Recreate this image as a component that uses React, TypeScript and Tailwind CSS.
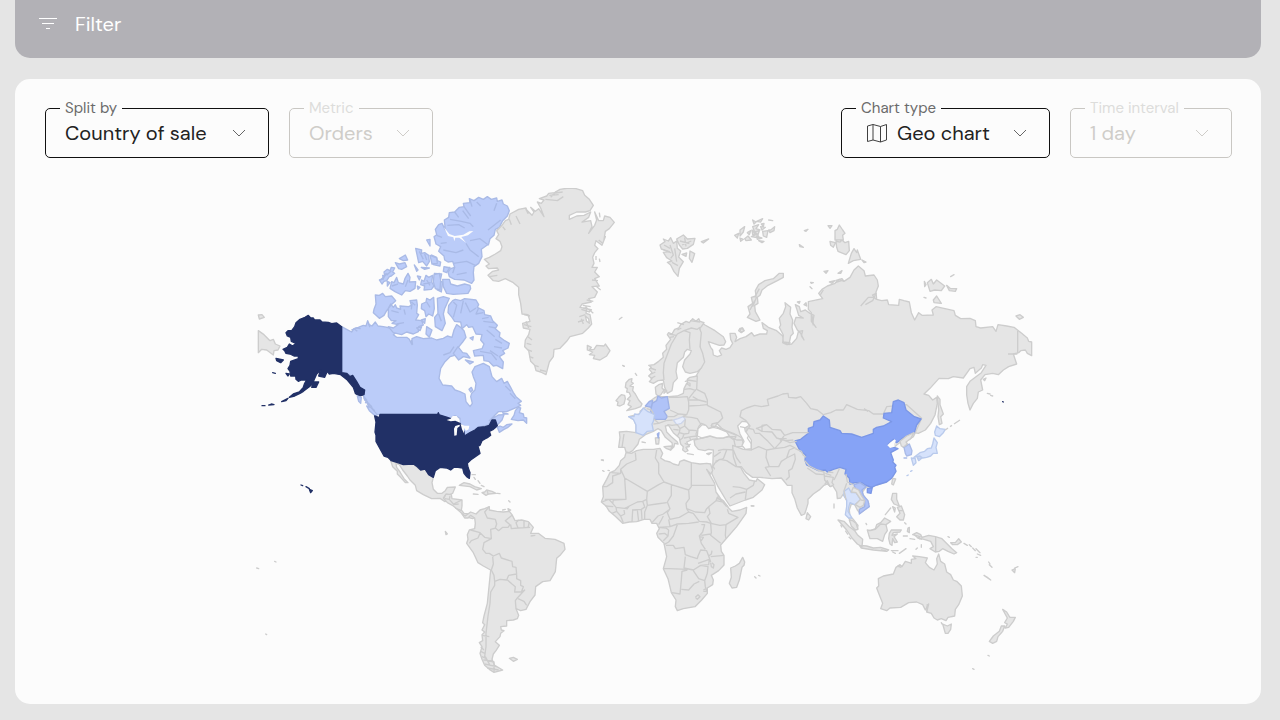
import React from 'react';

type Tone = 'none' | 'us' | 'china' | 'germany' | 'canada' | 'france' | 'hungary' | 'sea' | 'lake';

interface Shape {
  tone: Tone;
  d: string;
}

interface MapSheet {
  name: string;
  x: number;
  y: number;
  shapes: Shape[];
  // borders and fjords, drawn as lines only
  lines?: string;
  blueLines?: string;
}

const toneClass: Record<Tone, string> = {
  none: 'fill-[#e5e5e5] stroke-[#cdcdcd]',
  us: 'fill-[#213066] stroke-[#213066]',
  china: 'fill-[#86a3f6] stroke-[#7b97e6]',
  germany: 'fill-[#b0c3f8] stroke-[#9fb2e6]',
  canada: 'fill-[#bbccf9] stroke-[#a9bae6]',
  france: 'fill-[#d6e2fb] stroke-[#b9caec]',
  hungary: 'fill-[#e8eefc] stroke-[#cdd5ea]',
  sea: 'fill-[#fcfcfc] stroke-[#cdcdcd]',
  lake: 'fill-[#fcfcfc] stroke-none',
};

// Every sheet is drawn at three units per map unit, from its own corner.
const sheets: MapSheet[] = [
  {
    name: 'russia',
    x: 740,
    y: 210,
    shapes: [
      { tone: 'none', d: 'M-120,335 -105,345 -75,362 -50,380 -43,395 -48,405 -62,406 -95,395 -88,412 -82,420 -80,435 -68,440 -55,435 -62,422 -55,414 -42,418 -30,413 -22,400 -28,388 -30,370 -15,370 -10,382 -15,395 0,386 18,380 35,368 42,378 60,372 80,372 82,362 70,355 66,338 76,345 85,352 110,362 128,378 130,396 148,398 152,378 160,370 156,352 158,330 150,312 152,292 135,278 137,290 130,310 118,325 122,345 118,352 130,375 128,398 140,404 155,402 170,385 175,365 188,362 184,378 192,390 182,370 172,360 162,340 168,322 190,324 176,316 170,296 166,284 178,290 182,305 196,300 210,310 222,316 218,338 228,352 214,334 214,308 205,298 205,275 248,266 236,250 246,238 262,228 285,220 298,208 312,214 330,202 342,180 355,168 372,182 376,198 402,195 412,210 415,228 408,246 410,268 425,272 442,270 446,284 476,286 478,268 492,272 508,276 514,308 524,330 536,308 546,316 580,315 576,300 588,290 615,296 642,302 646,316 662,326 690,325 706,332 708,350 722,354 758,350 768,364 774,344 800,348 822,352 845,370 862,384 866,394 875,396 875,437 862,430 856,420 842,422 836,428 820,432 830,462 806,470 790,480 775,494 758,490 735,494 722,510 728,540 715,546 712,565 700,580 690,600 684,580 680,555 680,530 690,514 708,500 724,488 738,466 728,464 724,474 706,490 702,472 690,476 670,504 640,500 625,506 597,505 570,535 552,552 566,556 578,570 590,562 592,580 585,615 572,640 556,660 535,670 522,668 400,660 250,640 120,640 20,660 20,690 -15,680 -55,655 -70,640 -130,600 -150,540 -130,495 -115,470 -120,420z' },
      { tone: 'none', d: 'M22,322 30,312 24,290 38,280 34,262 48,258 46,242 56,224 75,212 100,206 118,190 130,190 130,202 112,212 84,226 66,240 60,256 52,262 54,280 44,286 46,305 60,330 48,334 35,328z' },
      { tone: 'none', d: 'M285,62 292,58 298,45 308,60 315,70 308,76 310,90 285,90zM288,94 300,96 306,90 315,98 326,94 328,122 318,134 294,124 290,112zM270,94 286,98 280,112 272,106zM325,160 334,130 342,116 350,128 352,120 362,148 340,152zM366,150 378,156 372,158zM264,47 276,47 270,55zM193,62 204,58 198,64zM178,104 190,112 180,110zM252,184 264,182 258,190zM294,190 306,182 302,190zM212,217 220,218 214,220zM210,230 216,236zM268,216 284,212 276,220z' },
      { tone: 'none', d: 'M562,218 574,208 580,222 590,210 614,228 604,242 584,240 570,244zM620,226 632,236 650,236 646,244 628,242zM590,258 604,280 582,278 580,270zM553,214 558,224 554,230zM632,200 642,194zM552,262 558,264zM828,318 840,314 850,322 838,328z' },
      { tone: 'none', d: 'M38,30 48,36 42,42zM50,34 68,26 62,36zM64,42 72,40 70,50zM86,30 98,32zM38,50 56,44 48,56 60,60 44,66zM62,50 76,52 66,60zM92,60 104,50 102,62 90,68 86,60zM68,64 84,62 80,82 70,78zM34,80 52,72 58,84zM0,60 14,50 10,66 0,78zM22,68 32,62 28,74zM14,86 24,78 34,90 18,92zM56,92 72,94 66,98zM0,84 10,88 2,94zM-16,76 -4,70 -8,84zM44,66 58,62 54,74zM50,78 66,84 52,88zM36,60 46,72 38,74z' },
      { tone: 'none', d: 'M0,355 8,354 12,362 4,368 -4,362zM172,276 180,274 178,280zM192,284 198,278 200,288zM730,508 738,504 734,512zM742,550 750,552zM752,556 758,558z' },
    ],
    lines: 'M833,363 833,430M804,432 832,432M362,288 385,262 402,262M285,218 310,210M130,398 150,404M140,404 152,398M376,284 398,272 408,250 396,256M286,212 306,206 312,214M240,256 250,240M30,300 44,272M38,290 50,260M44,262 58,236M216,316 220,346M398,256 408,268',
  },
  {
    name: 'svalbard',
    x: 650,
    y: 225,
    shapes: [
      { tone: 'none', d: 'M30,60 45,50 40,42 55,48 62,38 70,55 80,48 82,70 92,78 86,96 100,110 88,130 84,154 72,140 62,120 52,112 66,108 50,98 40,82 58,80 34,72zM80,42 100,30 112,42 135,40 130,58 112,70 98,72 88,60zM96,88 110,84 108,94zM120,78 134,86 126,112 118,100zM154,50 176,42 160,54z' },
    ],
    lines: 'M60,60 70,90 62,100M74,70 80,110M90,48 118,56M96,60 124,48M42,60 60,70M40,74 64,84M66,112 84,122M104,38 108,64',
  },
  {
    name: 'canada mainland and alaska',
    x: 250,
    y: 300,
    shapes: [
      { tone: 'none', d: 'M25,92 42,104 60,122 70,118 76,132 90,138 84,150 72,152 70,165 50,150 35,148 25,158zM25,45 36,44 43,52 28,57z' },
      { tone: 'canada', d: 'M275,80 290,88 305,96 312,86 325,82 340,76 348,78 353,62 358,74 366,78 376,66 384,78 400,80 420,84 440,96 430,104 440,112 470,112 478,118 486,134 486,116 500,110 520,116 545,114 560,120 580,115 592,108 606,112 612,90 620,74 632,82 642,92 648,112 638,126 620,148 614,166 600,170 585,185 572,205 567,235 578,255 605,258 615,270 630,275 645,282 648,305 660,320 667,310 662,290 665,280 675,270 678,250 670,230 666,216 675,200 700,190 718,200 726,230 740,245 755,235 762,250 772,244 782,262 790,278 798,290 814,304 804,310 812,316 800,322 770,335 745,335 730,350 718,362 745,345 762,344 756,360 742,375 725,360 715,375 685,382 660,398 643,410 640,395 642,380 630,370 630,355 615,347 600,355 565,345 390,343 376,344 372,330 360,325 352,305 344,300 340,286 330,278 300,225 275,218z' },
      { tone: 'us', d: 'M108,98 114,92 125,92 134,80 138,68 150,58 165,52 175,46 182,54 190,54 194,60 210,60 216,66 235,67 245,71 260,69 275,80 275,218 290,220 300,230 308,226 320,245 330,262 344,270 342,284 328,288 316,280 310,262 292,240 272,224 250,220 238,222 232,214 224,232 206,228 212,210 200,222 192,240 188,252 176,262 160,274 150,280 134,288 118,292 130,282 148,276 160,262 164,250 170,240 154,240 145,244 138,238 137,228 122,228 120,214 114,206 120,196 122,184 145,176 145,168 132,168 120,162 108,160 104,152 99,148 112,142 118,132 128,138 138,130 124,124 122,112 112,108z' },
      { tone: 'us', d: 'M78,175 100,180 92,188 80,182zM108,220 118,222 114,228zM95,305 114,295 108,302zM56,315 64,312 72,314zM36,317 45,317zM68,218 76,220zM185,262 192,246 206,246 198,262zM153,555 158,557zM168,560 178,566zM178,568 187,572 182,578z' },
      { tone: 'canada', d: 'M322,288 334,292 332,310 326,304zM350,318 362,322 382,344 376,348 358,332z' },
      { tone: 'none', d: 'M20,804 26,806zM74,784 78,786zM47,1002 50,1004z' },
      { tone: 'us', d: 'M2258,305 2260,306z' },
    ],
    blueLines: 'M312,86 322,94M353,66 360,82M484,120 488,134M340,288 350,300 346,310M350,306 366,320M580,165 600,158 612,140M342,294 356,318M356,310 374,334M304,90 318,84 332,86M766,258 782,274M780,280 796,296',
  },
  {
    name: 'western arctic islands',
    x: 250,
    y: 180,
    shapes: [
      { tone: 'canada', d: 'M376,345 388,346 398,340 406,350 425,348 437,362 424,374 410,392 402,406 388,415 370,398 372,388 378,372zM415,385 422,372 430,382 436,374 440,384 452,388 450,378 476,380 484,376 480,362 500,360 502,375 500,400 506,404 497,420 515,422 520,435 506,440 505,455 490,462 470,456 455,464 430,458 415,440 430,444 444,434 426,430 438,422 424,422 415,410z' },
      { tone: 'canada', d: 'M388,300 400,296 398,286 404,288 402,276 412,268 420,272 424,262 434,264 428,276 434,280 424,288 418,290 410,302 402,304 396,312zM412,304 420,308 412,318zM448,236 466,225 473,240 460,242zM436,248 448,252 465,248 470,260 455,268 446,266z' },
      { tone: 'canada', d: 'M425,305 432,308 440,292 445,308 460,312 465,295 474,280 480,292 478,306 497,305 495,325 480,334 466,332 455,345 435,335 420,325zM497,205 515,210 514,220 524,218 536,226 538,245 530,258 518,244 506,248zM545,225 560,232 562,242 572,246 570,258 550,254zM493,255 504,270 500,274zM530,180 540,178 540,198zM502,288 512,290 508,300zM502,318 510,322 504,328zM514,262 538,264 524,268z' },
      { tone: 'canada', d: 'M515,300 522,304 528,286 536,292 548,286 545,306 552,318 544,328 522,330 524,318 512,314zM553,280 575,282 572,296 558,298zM556,302 578,306 574,336 562,330zM585,262 600,262 592,274z' },
      { tone: 'canada', d: 'M515,372 528,366 530,355 540,360 551,352 553,386 548,408 536,402 528,410 524,392 514,386zM562,355 580,350 598,355 584,386 580,402 586,430 576,452 556,440 554,412 564,400zM500,444 515,440 510,452zM514,420 526,416 524,430zM530,440 546,450 538,472 528,462z' },
    ],
    blueLines: 'M424,392 446,398M462,388 466,404M486,372 484,388M440,432 462,428M524,222 530,240M408,280 398,300M474,300 466,320M530,300 540,316M566,402 574,424M392,300 412,280M410,286 424,272M426,318 444,312M508,214 520,238M520,312 542,308M530,366 540,382M484,366 496,376',
  },
  {
    name: 'ellesmere, baffin, greenland',
    x: 420,
    y: 180,
    shapes: [
      { tone: 'canada', d: 'M73,120 86,112 88,98 104,96 118,82 132,80 130,70 150,68 148,56 162,62 176,52 190,58 202,50 214,58 230,54 232,64 246,60 250,72 262,78 268,92 262,108 248,122 238,142 226,148 222,166 210,176 206,192 184,208 186,230 176,250 162,260 160,278 162,300 155,310 132,300 104,298 88,290 84,276 92,266 104,262 98,244 84,246 74,240 72,228 56,214 62,200 48,192 42,170 50,164 46,148 56,134 66,130 76,150z' },
      { tone: 'canada', d: 'M68,298 88,298 92,312 112,318 134,312 150,316 152,326 144,340 100,343 80,340 70,320zM42,284 58,280 62,300 60,330 46,326 40,306zM30,226 50,234 52,250 36,252zM72,260 88,264 80,278 70,274z' },
      { tone: 'canada', d: 'M84,398 86,376 98,362 106,358 122,362 134,356 168,360 176,374 172,382 192,392 194,404 212,408 218,422 232,436 226,446 240,458 238,470 254,482 268,490 264,504 248,512 254,520 238,530 250,546 248,566 230,556 220,558 206,544 192,542 190,526 164,528 160,512 186,506 192,492 182,480 186,464 168,462 158,440 146,442 140,434 126,446 122,426 104,424 96,412z' },
      { tone: 'canada', d: 'M100,520 114,500 128,518 140,520 150,534 130,530 116,540zM136,540 160,546 150,552zM150,474 160,470 158,480z' },
      { tone: 'none', d: 'M193,238 208,232 226,222 242,212 246,200 240,184 228,176 236,164 230,152 246,136 256,122 266,118 270,102 296,88 318,84 324,100 318,88 336,106 342,96 332,82 346,94 356,86 372,110 362,84 352,66 364,70 372,60 358,56 380,48 386,40 404,38 420,28 446,24 468,26 488,32 494,46 508,58 520,76 510,92 496,96 470,96 448,106 448,118 470,108 492,106 512,96 506,112 486,126 512,122 516,140 506,160 524,136 530,120 524,96 536,122 550,122 554,108 570,112 583,127 568,146 556,154 552,178 556,170 546,196 528,182 524,196 534,206 524,218 518,232 522,250 516,262 532,262 524,276 538,290 524,296 538,318 516,320 532,336 524,352 506,356 514,366 486,372 480,382 500,386 498,400 510,404 515,432 505,444 488,460 450,470 440,484 420,505 402,508 400,530 388,546 378,584 362,576 348,572 344,556 332,544 326,512 314,500 316,480 326,464 330,448 310,444 308,430 330,424 324,404 306,402 302,370 296,344 296,322 280,308 256,296 236,304 220,302 204,286 218,274 236,270 232,264 206,266 198,258 208,252z' },
      { tone: 'none', d: 'M502,496 514,502 508,510 522,508 530,496 552,498 556,492 570,512 560,528 540,540 520,536 524,526 508,524 518,516 502,510zM598,418 606,412zM609,557 613,559z' },
      { tone: 'sea', d: 'M496,408 506,416 508,430 500,424z' },
    ],
    lines: 'M288,108 300,132M268,118 274,134M388,46 416,44M376,58 414,62M392,52 410,34M400,40 428,36M412,62 430,50M536,180 548,190M530,320 542,330M488,376 512,380M478,410 496,404M474,426 492,420M500,360 520,364M484,388 510,396M312,404 330,408M312,434 334,440M324,470 336,480M320,490 334,494M324,510 336,514M328,530 340,534M342,556 356,560M360,570 378,574M516,300 534,302M318,424 326,444M490,384 516,390M538,98 540,112M528,228 528,240M538,236 540,246M248,140 256,150M208,290 232,286M496,380 520,400M484,416 490,432',
    blueLines: 'M132,80 152,108M150,60 156,80M128,92 146,116M104,96 116,112M170,66 182,78M90,118 124,124 150,130 160,140M82,136 116,134 134,144M230,70 222,92M206,196 180,176 150,182M176,230 150,210 138,190M100,250 140,244 166,256M70,210 108,218 130,210M62,190 80,188M50,166 66,172M104,262 98,280M110,284 140,278M100,366 110,376 100,412M130,362 122,400M136,368 150,396 168,384M176,384 168,402 190,398M186,416 206,412M190,424 222,428M206,440 228,444M200,450 224,470M226,478 246,490M222,500 246,504M210,512 234,528M180,514 214,520 230,540M242,120 204,150',
  },
  {
    name: 'axel heiberg channel',
    x: 420,
    y: 180,
    shapes: [{ tone: 'lake', d: 'M72,142 88,162 104,168 130,164 148,154 160,153 144,166 124,171 138,188 118,173 106,173 103,184 100,172 84,168z' }],
  },
  {
    name: 'usa and central america',
    x: 360,
    y: 370,
    shapes: [
      { tone: 'none', d: 'M92,272 120,282 160,282 178,298 195,297 205,312 220,322 216,338 220,358 232,370 246,370 256,362 262,352 286,351 278,370 265,375 268,388 255,395 240,385 215,386 190,374 170,362 166,346 150,330 142,318 128,300 118,284 108,280 110,292 120,306 132,326 144,338 136,338 122,322 112,312 112,304 98,290z' },
      { tone: 'none', d: 'M250,384 258,372 274,374 276,386 306,390 306,408 304,420 312,430 326,432 340,430 346,440 338,446 316,440 300,425 280,408 262,398z' },
      { tone: 'none', d: 'M298,346 312,338 330,342 344,350 364,356 350,360 330,350zM366,368 374,366 380,360 396,364 408,370 386,372 378,376zM412,370 420,371zM340,372 354,373zM336,314 346,314zM342,322 346,328zM354,332 360,340zM364,346 372,350zM446,392 450,396zM428,420 436,418zM444,416 452,420 446,424zM256,484 262,492 258,494z' },
      { tone: 'us', d: 'M60,133 233,133 235,128 238,135 262,142 272,146 286,152 298,158 303,165 312,185 313,198 330,188 345,180 355,172 376,170 388,166 396,150 406,150 412,168 400,178 388,184 392,196 384,202 376,206 366,212 360,226 354,228 360,250 346,260 332,270 322,280 324,292 330,308 328,325 320,320 312,310 308,294 294,292 282,292 272,300 260,294 240,292 226,302 220,322 206,314 195,297 182,300 172,290 160,282 130,284 120,280 94,272 84,262 72,258 60,236 48,214 48,196 45,186 48,156 44,138 56,142 56,150z' },
      { tone: 'canada', d: 'M454,148 462,136 466,122 474,112 482,114 478,128 490,132 492,142 500,144 500,160 490,150 474,152zM412,172 420,168 430,172 440,164 456,162 444,172 432,178 418,187zM428,128 444,132 432,132z' },
      { tone: 'lake', d: 'M260,150 272,146 278,138 290,138 298,150 300,158 286,152 272,154zM283,197 282,176 286,168 298,164 300,168 292,174 290,196zM302,162 314,167 328,167 326,178 318,182 312,174 312,190 306,178z' },
      { tone: 'canada', d: 'M327,58 334,52 338,60 332,66z' },
    ],
    lines: 'M255,386 268,388 270,378M268,388 280,402 306,390M280,404 296,402M286,414 304,422M258,372 252,384M382,362 384,374',
  },
  {
    name: 'south america',
    x: 450,
    y: 490,
    shapes: [
      { tone: 'none', d: 'M36,72 46,78 62,66 78,72 90,60 104,56 118,50 118,60 140,64 160,66 178,64 186,74 195,92 215,90 235,95 250,112 242,130 265,130 285,145 315,148 342,160 345,178 332,194 320,205 316,245 300,272 278,275 257,290 255,315 240,335 228,358 212,362 198,356 206,376 202,386 190,390 170,392 170,408 152,410 154,420 162,422 152,430 150,440 136,455 148,466 138,482 130,492 126,508 134,526 158,540 132,547 118,538 104,526 96,508 90,490 96,470 88,458 98,452 96,434 104,426 96,420 104,404 98,398 102,378 112,340 122,240 100,228 84,218 70,188 50,160 54,148 52,134 58,120 74,116 76,100 74,84 62,76 54,84 44,84z' },
      { tone: 'none', d: 'M178,505 190,502 202,508 190,514z' },
    ],
    lines: 'M118,50 104,66 112,84 136,88 140,102 136,114 146,122 158,112 174,112 180,104 166,92 186,76M62,120 90,128 104,142 124,146 122,118 138,114M90,130 84,144 64,152 58,160M124,146 102,158 98,178 108,190 118,190 130,198 148,190 154,204 186,214 188,230 198,232 200,252 176,256 170,270 150,268 134,274 132,256 124,240 130,222 128,200M182,104 184,116 204,114 198,98 206,90M204,114 240,112M222,92 222,112M238,96 234,114M170,268 186,282 196,290 194,306 214,306 220,290 212,286 212,272 200,266 200,254M214,306 224,300 202,324 196,332 198,356M204,326 222,334 230,346M242,138 256,136M134,274 134,286 122,306 120,340 114,378 108,430 108,470 104,500 112,512 132,516 132,546M100,510 128,512M104,522 140,530M96,500 110,506M92,470 102,480M92,484 104,490M96,436 118,440M106,500 120,526M112,534 146,540',
  },
  {
    name: 'europe',
    x: 590,
    y: 300,
    shapes: [
      { tone: 'none', d: 'M178,245 186,236 176,228 186,218 178,208 184,202 176,196 192,194 206,184 220,172 218,160 230,148 228,136 242,118 232,104 236,98 246,102 254,88 266,84 272,74 288,64 298,68 308,56 318,64 326,56 330,64 342,68 334,80 328,85 334,98 330,140 338,160 344,186 334,204 322,215 300,220 286,216 278,200 284,180 300,162 304,152 292,148 284,156 280,172 262,188 258,215 262,235 250,248 246,272 232,280 224,262 220,240 204,242 190,250z' },
      { tone: 'none', d: 'M322,228 300,232 292,238 292,248 300,250 300,258 290,250 282,266 280,280 262,288 235,290 206,290 198,282 196,262 206,254 218,250 216,264 222,270 212,285 196,292 180,304 168,320 160,326 150,334 156,340 140,344 116,350 132,360 138,375 138,398 110,394 88,396 90,412 86,442 104,442 108,456 118,458 128,452 144,432 148,418 166,404 190,394 204,386 214,392 226,412 246,428 248,442 242,450 252,440 254,430 264,432 262,426 244,410 230,396 226,378 236,376 250,398 268,414 272,432 280,440 278,450 286,456 294,452 288,442 298,440 290,426 308,418 322,416 318,402 326,380 334,370 344,374 352,388 366,382 364,376 384,368 398,354 392,336 352,316 352,300 344,280 320,268z' },
      { tone: 'none', d: 'M312,420 330,416 360,408 392,414 420,410 438,410 432,420 436,440 440,470 450,510 368,510 370,450 355,448 345,452 325,448 315,436zM380,380 402,390 430,400 446,408 456,414 462,440 436,440 432,420 418,410 400,400z' },
      { tone: 'none', d: 'M118,238 126,236 124,246 130,250 120,258 130,260 128,272 136,282 146,300 156,312 152,320 136,326 110,332 124,320 114,314 120,302 112,298 122,288 118,278 110,276 112,266 106,262 108,248zM82,316 84,306 78,302 86,292 94,284 104,286 106,296 102,312 90,318zM98,196 102,198zM136,220 140,226zM222,440 246,438 242,450 230,446zM196,414 208,412 206,432 198,432zM292,461 310,464zM350,461 364,458 356,464zM222,268 230,272 222,280zM156,426 166,428zM34,480 40,480zM286,244 294,242zM450,90 456,84 462,92 454,96z' },
      { tone: 'germany', d: 'M204,288 214,294 232,290 238,325 222,334 232,350 226,358 192,358 190,342 182,334 186,310 200,302z' },
      { tone: 'germany', d: 'M166,318 178,304 188,302 184,322 174,320zM202,402 207,398 205,414z' },
      { tone: 'france', d: 'M116,350 132,350 134,342 146,344 160,324 172,334 194,344 190,364 186,372 190,392 172,394 160,406 138,398 138,375 130,358z' },
      { tone: 'hungary', d: 'M250,360 264,356 280,350 286,358 274,370 260,374z' },
      { tone: 'sea', d: 'M443,378 456,364 476,366 478,376 464,384 466,394 478,404 472,414 484,432 484,446 466,448 456,436 462,424 450,402z' },
      { tone: 'sea', d: 'M322,408 324,386 336,374 348,376 356,386 370,382 386,386 410,396 418,408 400,414 380,414 360,408 336,414z' },
      { tone: 'none', d: 'M366,372 382,368 376,380 364,378z' },
    ],
    lines: 'M222,240 220,218 222,190 244,132 262,102 282,92 300,98 298,120 300,148M282,92 304,84 322,88 330,82M262,90 274,84M240,112 252,110M184,222 196,216M180,204 198,210M182,236 196,228M236,292 262,292 292,290 296,306 296,330 290,344 266,342 240,330M296,300 326,300 350,306M296,330 296,318 330,316 352,314M290,344 278,350M282,268 300,266 318,272M292,240 320,244M296,296 310,278 318,268M308,290 326,300M280,350 304,352 322,356 332,372M286,358 284,378 296,390 320,392M266,342 252,350 232,350M192,358 206,370 228,362 248,360M206,370 190,372M246,376 262,374 270,386 284,378M232,374 248,376M270,386 268,398 262,408M250,388 266,390M268,398 282,402 278,414 270,420M282,402 296,400 298,390M282,414 304,410 322,408M102,402 96,442M298,410 302,420M284,430 300,436M170,326 184,330 190,340M384,452 400,448 436,450M372,470 392,456M410,450 400,476 376,484M400,390 440,406M420,410 440,420 460,420M480,364 500,364 520,370M290,440 302,432M262,68 282,74M300,62 330,66M238,102 258,106',
  },
  {
    name: 'asia',
    x: 740,
    y: 370,
    shapes: [
      { tone: 'none', d: 'M-22,226 -20,260 -10,290 4,290 18,308 38,322 60,322 96,326 124,324 134,336 142,346 156,346 156,368 164,386 172,414 184,436 194,432 198,420 204,400 204,388 220,372 240,358 252,346 262,342 272,350 278,346 290,366 292,386 302,384 310,372 320,392 322,420 318,432 330,450 336,470 352,478 354,466 340,448 330,440 328,420 334,402 344,404 352,420 360,430 378,416 386,400 376,384 366,368 378,352 410,345 440,335 465,300 450,245 470,225 482,216 490,232 500,230 496,216 520,200 525,190 545,145 500,104 440,110 430,132 400,132 386,122 352,118 320,104 310,120 288,120 272,128 250,134 232,120 212,116 200,100 182,80 168,84 146,82 144,70 128,72 114,78 82,88 86,106 64,110 44,106 20,114 4,122 0,140 18,152 30,168 18,186 34,210 34,240 10,238z' },
      { tone: 'none', d: 'M-85,296 -76,280 -60,268 -40,272 -12,290 2,292 12,310 28,330 48,334 52,326 74,344 66,360 40,382 16,390 -30,408 -42,390 -66,350 -84,312z' },
      { tone: 'china', d: 'M165,213 182,208 205,190 205,175 220,170 222,155 240,150 250,138 268,150 270,172 300,182 305,190 335,192 365,202 400,190 400,178 410,172 430,168 455,155 430,144 432,130 455,128 460,95 475,90 492,98 498,120 523,140 543,147 530,165 523,188 505,195 486,206 470,218 460,208 445,222 448,232 462,232 474,236 452,248 460,270 458,276 468,286 464,292 468,304 455,325 440,336 410,345 395,352 375,345 366,338 345,338 330,342 328,325 315,312 318,298 300,292 280,298 262,306 256,300 235,302 200,285 195,270 197,255 180,242z' },
      { tone: 'china', d: 'M382,356 397,352 393,370 382,368z' },
      { tone: 'lake', d: 'M442,226 450,218 464,208 468,212 462,222 464,230 450,234z' },
      { tone: 'none', d: 'M480,214 500,198 522,188 512,206 498,216 504,224 492,232 484,228zM458,325 467,327 460,345 455,342zM202,428 212,440 206,450 198,446zM282,402 282,414zM34,407 42,408zM592,78 600,88 600,104 610,132 602,140 606,160 598,164 594,140 596,120z' },
      { tone: 'canada', d: 'M492,232 508,222 516,242 514,254 500,258 496,250zM492,264 500,264z' },
      { tone: 'france', d: 'M590,168 600,176 616,178 610,188 598,200 586,196 584,186zM582,204 592,218 588,232 592,250 580,250 572,258 560,262 548,264 540,258 522,262 540,248 554,244 562,236 574,234 578,222zM514,264 526,266 528,278 520,286zM532,264 546,264 536,272zM512,304 516,302zM501,317 505,315z' },
      { tone: 'france', d: 'M312,364 326,354 334,368 348,368 362,390 344,404 330,398 326,412 324,424 336,444 326,444 316,434 320,410 320,390 312,378z' },
      { tone: 'germany', d: 'M342,344 360,338 378,350 366,360 370,376 384,392 388,410 374,420 358,432 358,418 374,410 374,392 364,376 358,362 346,356z' },
      { tone: 'none', d: 'M340,352 356,360 364,376 374,392 370,406 360,412 346,404 362,388 348,368 334,366z' },
    ],
    lines: 'M372,116 384,124M616,180 624,174M630,170 636,166M642,162 660,150M48,174 66,184 96,186 110,204 130,210M66,184 66,166 80,164 96,178 122,180 134,196 158,188 206,188M0,170 40,178 44,188M44,190 58,190 84,214 104,236 134,232 150,226 166,234M80,164 48,176M80,240 78,262 88,290 76,292 92,318M88,290 116,290 124,274 140,264 148,240 166,232M80,240 104,236 124,214 120,206 140,206M140,264 164,252 166,268 156,296 146,302 148,320 138,330M166,236 184,244 190,256 198,262M194,272 208,288 232,300 252,306 252,314 228,312 202,294M252,306 254,330 266,344M254,318 280,322 276,338 282,346M264,306 280,308M298,296 292,310 282,330M318,312 322,336 340,344M320,340 312,362 318,388M362,390 374,392M34,240 56,230 80,240M-20,240 -10,264 2,280M-22,350 0,352 20,358 40,346 44,332M20,358 16,388M-30,384 -12,372 16,366M330,456 348,458M502,222 492,230M256,310 274,316M254,344 262,332 270,350M132,198 120,214M120,206 150,218 170,214M134,212 160,210',
  },
  {
    name: 'africa',
    x: 590,
    y: 430,
    shapes: [
      { tone: 'none', d: 'M108,68 124,70 140,62 160,58 190,58 210,55 218,70 212,84 224,92 240,96 250,102 266,106 270,94 282,90 304,98 330,102 350,100 362,102 368,122 362,132 350,118 374,160 378,186 392,206 400,212 416,234 426,244 450,240 470,232 468,250 440,290 405,330 392,345 394,364 402,376 402,405 386,422 364,436 370,450 368,464 352,474 352,490 335,510 315,530 280,536 262,542 256,530 258,510 244,488 234,446 220,416 230,380 222,340 204,322 200,310 208,296 200,280 186,280 180,268 162,268 140,275 118,276 98,280 75,258 58,244 48,228 34,216 40,200 38,170 50,148 60,128 74,122 88,106 92,92 104,82z' },
      { tone: 'none', d: 'M458,382 464,396 462,406 456,412 448,450 440,472 426,474 418,460 424,442 422,414 436,408 448,400zM494,440 498,444zM506,436 510,438zM36,90 40,92zM38,122 42,124zM54,121 58,122zM484,228 490,228z' },
    ],
    lines: 'M136,68 138,90 110,102 92,118 92,130 64,128M92,130 68,138 68,158 50,170 38,170M92,118 104,144 108,208 44,208M104,144 172,184 206,164 222,156 206,130 206,100 196,84 200,60M222,156 244,164 296,180 304,170 304,98M304,166 372,166M296,180 298,206 288,220 290,236 296,246 268,262 240,268 232,248 240,236 232,216 244,196 244,162M172,184 170,208 158,214 142,216 118,228 110,238M108,208 70,210 68,220 78,232 110,236M170,208 172,226 200,222 230,218M172,226 164,246 164,268M36,216 56,208 68,220M46,228 70,230M78,232 80,244 66,250M80,244 92,258 100,278M92,258 104,252 102,240M128,240 126,276M142,240 146,274M154,238 156,268M126,240 154,238 166,230M186,278 204,258 220,252 236,240M236,268 240,290 208,292M204,292 228,294 236,300M240,290 262,282 296,280 326,276M296,246 310,250 328,274 350,276 362,280M290,236 316,246 344,248 350,236 356,230 360,250 352,260 364,280M356,230 378,212 382,202 396,214 410,230M378,212 400,216 414,230M362,280 390,286 408,284 444,262 416,250 412,238M408,284 406,316 408,326M362,280 364,308 362,316 392,340M334,284 344,284 338,306 328,318 334,340 346,358M334,316 362,312M334,332 340,322 328,320M262,284 250,318 236,336 222,344M236,300 234,318 220,332M228,346 250,346 256,356 282,352 286,374 302,380 322,386 324,378 332,360 350,362 356,378 362,396M402,376 362,380M286,380 282,414 292,418 238,416 220,416M282,414 310,420 332,406 356,404 358,388 324,400M292,420 276,424 274,450 270,492 246,488M310,422 326,446 344,452 352,430 354,410 332,406M274,478 296,480 312,462 328,454M344,452 346,470 352,486M316,502 324,494 330,500 322,508 316,502M340,480 348,476 350,484 340,484M356,378 364,372 366,362M366,398 372,404 370,414 364,410 362,398M206,312 224,310 234,318M386,196 382,206 396,210M158,214 164,230M104,236 118,228M140,240 126,240M370,110 374,118M220,258 214,270 206,284',
  },
  {
    name: 'oceania',
    x: 820,
    y: 480,
    shapes: [
      { tone: 'none', d: 'M54,120 72,124 88,140 104,152 112,164 128,178 126,200 112,192 96,174 80,150zM118,196 140,198 160,204 182,202 206,210 200,214 160,210 124,204zM142,150 152,152 166,146 170,134 182,128 194,114 212,124 198,134 202,152 194,164 188,184 172,176 150,176 146,164zM88,120 98,122 108,130 114,148 106,150 94,138z' },
      { tone: 'none', d: 'M208,160 214,150 244,150 240,156 220,158 216,166 232,162 222,170 232,186 224,188 218,176 216,196 210,192 206,176zM218,40 230,40 230,58 238,78 222,72 214,58zM232,82 244,78 254,104 250,120 240,120 230,110 240,100zM218,80 226,84 224,96zM196,104 212,84zM238,92 246,92zM264,144 268,142 268,158 262,154zM250,168 262,168zM270,176 284,178zM238,220 258,206 244,216zM214,212 234,212zM184,210 196,212zM218,216 226,220zM292,204 288,208zM304,194 304,202zM254,128 258,132zM138,130 140,134z' },
      { tone: 'none', d: 'M278,164 290,158 302,164 306,172 326,166 346,170 366,176 384,194 396,206 410,218 402,222 384,214 368,206 358,214 346,216 330,206 340,200 332,184 312,178 294,174 300,170zM392,188 406,188 416,176 424,186 412,194 398,194zM384,170 388,172zM432,190 442,196zM448,194 454,200zM458,204 466,212zM468,206 480,218zM472,222 482,226zM468,232 472,232zM506,246 510,252zM508,254 516,262zM492,286 502,292 512,300zM576,270 586,266 584,278zM584,264 594,260zM504,526 508,528zM458,566 462,568z' },
      { tone: 'none', d: 'M175,296 190,288 220,282 228,262 240,254 246,260 256,244 268,248 274,250 274,238 288,236 278,228 298,230 322,234 316,248 328,262 342,270 352,252 350,236 356,222 362,244 374,252 380,276 392,284 400,300 410,304 424,318 427,348 416,374 406,388 404,408 384,412 378,422 364,416 352,420 342,414 334,400 320,396 326,372 316,390 308,374 290,366 266,368 242,382 210,384 200,392 182,386 188,370 176,340 170,324 176,318zM368,432 382,438 394,432 392,448 384,460 376,460zM364,428 366,432z' },
      { tone: 'none', d: 'M548,388 560,396 566,406 570,412 586,412 580,424 566,442 556,444 562,432 554,428 562,414zM544,438 554,438 548,454 534,470 530,484 518,490 508,484 520,468 538,454z' },
    ],
    lines: 'M347,170 347,216M146,152 166,148 182,132 198,134M322,372 320,396M62,134 66,142M76,152 84,164M86,170 94,178M232,258 244,262M284,166 300,178M290,172 306,178',
  },
];

const GeoChart: React.FC = () => (
  <svg viewBox="45 188 1187 486" className="block w-full mt-[30px]" role="img" aria-label="Orders by country of sale">
    {sheets.map((sheet) => (
      <g key={sheet.name} transform={`translate(${sheet.x} ${sheet.y}) scale(${1 / 3})`} strokeWidth={4} strokeLinejoin="round">
        {sheet.shapes.map((shape, i) => (
          <path key={i} d={shape.d} className={toneClass[shape.tone]} />
        ))}
        {sheet.lines && <path d={sheet.lines} className="fill-none stroke-[#cdcdcd]" />}
        {sheet.blueLines && <path d={sheet.blueLines} className="fill-none stroke-[#a9bae6]" />}
      </g>
    ))}
  </svg>
);

const Chevron: React.FC<{ className: string }> = ({ className }) => (
  <svg width="14" height="8" viewBox="0 0 14 8" fill="none" stroke="currentColor" className={`shrink-0 pointer-events-none ${className}`}>
    <path d="M1 1l6 6 6-6" />
  </svg>
);

const MapIcon: React.FC = () => (
  <svg width="20" height="20" viewBox="0 0 20 20" fill="none" stroke="currentColor" className="shrink-0 ml-1.5 mr-2.5 text-[#404040]">
    <path d="M.5 3l5.500-1.500 7.500 2 6-2v15.500l-6 2-7.500-2-5.500 1.500zM6 1.500v15.500M13.500 3.500v15.500" />
  </svg>
);

interface SelectFieldProps {
  id: string;
  label: string;
  value: string;
  className: string;
  disabled?: boolean;
  icon?: React.ReactNode;
}

const SelectField: React.FC<SelectFieldProps> = ({ id, label, value, className, disabled, icon }) => (
  <fieldset className={`min-w-0 rounded-[5px] border pb-[11px] ${disabled ? 'border-[#c9c7c3]' : 'border-[#111111]'} ${className}`}>
    <legend className={`ml-3.5 px-[5px] h-6 text-[15px] leading-6 ${disabled ? 'text-[#dddddb]' : 'text-[#6b6b6b]'}`}>
      <label htmlFor={id}>{label}</label>
    </legend>
    <div className={`flex items-center pl-[19px] pr-[22px] ${disabled ? 'text-[#cfcdc9]' : 'text-[#222222]'}`}>
      {icon}
      <select id={id} disabled={disabled} defaultValue={value} className="appearance-none flex-1 min-w-0 h-[26px] bg-transparent text-xl leading-[26px] outline-none disabled:opacity-100">
        <option>{value}</option>
      </select>
      <Chevron className={disabled ? 'text-[#cfcdc9]' : 'text-[#666666]'} />
    </div>
  </fieldset>
);

const App: React.FC = () => {
  return (
    <div className="min-h-screen bg-[#e5e5e5] pl-[15px] pr-[19px] pb-4 font-['DM_Sans','Inter',sans-serif]">
      <header className="rounded-b-[15px] bg-[#b2b1b6] pt-2.5 pb-5 px-6">
        <button type="button" className="flex items-center gap-[18px] text-xl leading-7 text-white">
          <svg width="18" height="12" viewBox="0 0 18 12" fill="none" stroke="currentColor">
            <path d="M0 .5h18M3 5.500h12M7 10.500h4" />
          </svg>
          Filter
        </button>
      </header>

      <main className="mt-[21px] rounded-[15px] bg-[#fcfcfc] pl-[30px] pr-[29px] pt-[17px] pb-[30px]">
        <div className="flex flex-wrap justify-between gap-5">
          <div className="flex gap-5">
            <SelectField id="split-by" label="Split by" value="Country of sale" className="w-[224px]" />
            <SelectField id="metric" label="Metric" value="Orders" className="w-[144px]" disabled />
          </div>
          <div className="flex gap-5">
            <SelectField id="chart-type" label="Chart type" value="Geo chart" className="w-[209px]" icon={<MapIcon />} />
            <SelectField id="time-interval" label="Time interval" value="1 day" className="w-[162px]" disabled />
          </div>
        </div>
        <GeoChart />
      </main>
    </div>
  );
};

export default App;
